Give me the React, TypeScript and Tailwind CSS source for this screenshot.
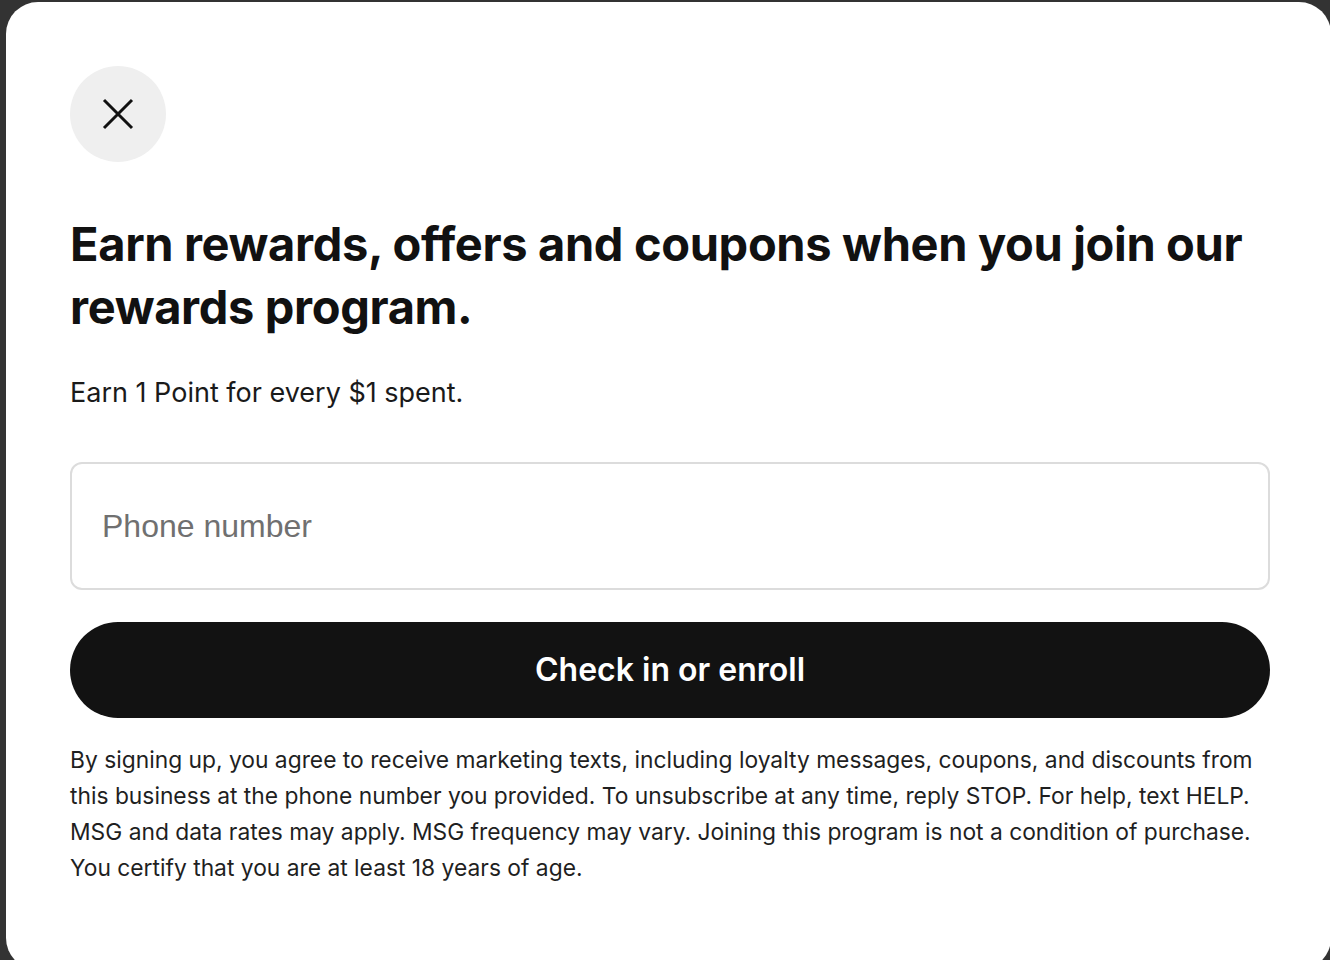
export default function App() {
  return (
    <div className="h-[960px] w-full overflow-hidden bg-[#333333] pl-[6px] pt-[2px]">
      <div className="h-[968px] w-[1325px] rounded-[32px] bg-white pl-[64px] pr-[60px] pt-[64px]">
        <button className="flex h-[96px] w-[96px] items-center justify-center rounded-full bg-[#efefef]">
          <svg width="32" height="32" viewBox="0 0 32 32" fill="none">
            <path d="M2 2 L30 30 M30 2 L2 30" stroke="#111111" strokeWidth="3" />
          </svg>
        </button>

        <h1 className="mt-[50px] font-['Inter',sans-serif] text-[47px] font-bold leading-[63px] tracking-[-0.35px] text-[#111111]">
          Earn rewards, offers and coupons when you join our rewards program.
        </h1>

        <p className="mt-[39px] font-['Inter',sans-serif] text-[27px] leading-[32px] text-[#1a1a1a]">
          Earn 1 Point for every $1 spent.
        </p>

        <div className="mt-[53px] flex h-[128px] w-[1200px] items-center rounded-[12px] border-2 border-[#dcdcdc] px-[30px]">
          <input
            className="w-full bg-transparent font-['Liberation_Sans',Arial,sans-serif] text-[32px] text-[#111111] outline-none placeholder:text-[#707070]"
            placeholder="Phone number"
          />
        </div>

        <button className="mt-[32px] flex h-[96px] w-[1200px] items-center justify-center rounded-full bg-[#121212] font-['Inter',sans-serif] text-[32px] font-semibold text-white">
          Check in or enroll
        </button>

        <p className="mt-[24px] w-[1230px] font-['Inter',sans-serif] text-[22.8px] leading-[36px] text-[#1f1f1f]">
          By signing up, you agree to receive marketing texts, including loyalty messages, coupons, and discounts from
          <br />
          this business at the phone number you provided. To unsubscribe at any time, reply STOP. For help, text HELP.
          <br />
          MSG and data rates may apply. MSG frequency may vary. Joining this program is not a condition of purchase.
          <br />
          You certify that you are at least 18 years of age.
        </p>
      </div>
    </div>
  );
}
